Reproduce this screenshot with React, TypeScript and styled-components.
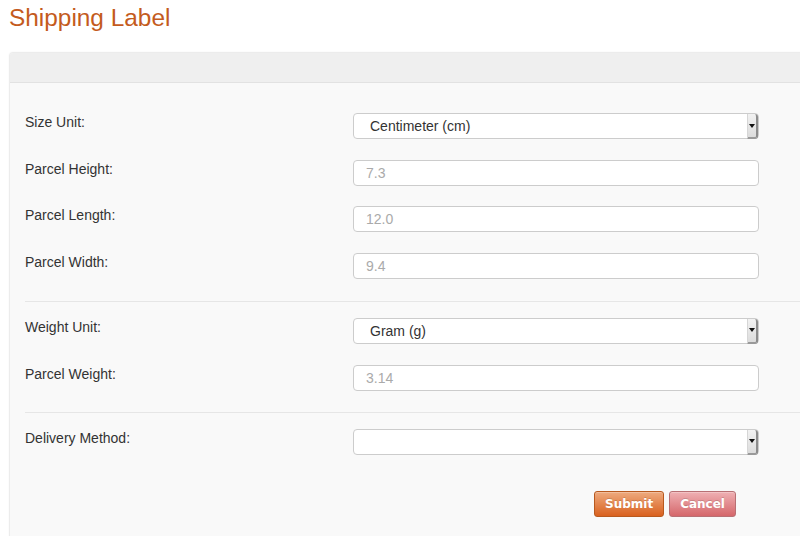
import styled, { createGlobalStyle } from 'styled-components';

const GlobalStyle = createGlobalStyle`
  html, body {
    margin: 0;
    padding: 0;
    background: #ffffff;
    overflow: hidden;
  }
  body {
    font-family: "Liberation Sans", Arial, sans-serif;
    color: #333333;
  }
`;

type Field = {
  label: string;
  kind: 'select' | 'input';
  value?: string;
};

const groups: Field[][] = [
  [
    { label: 'Size Unit:', kind: 'select', value: 'Centimeter (cm)' },
    { label: 'Parcel Height:', kind: 'input', value: '7.3' },
    { label: 'Parcel Length:', kind: 'input', value: '12.0' },
    { label: 'Parcel Width:', kind: 'input', value: '9.4' },
  ],
  [
    { label: 'Weight Unit:', kind: 'select', value: 'Gram (g)' },
    { label: 'Parcel Weight:', kind: 'input', value: '3.14' },
  ],
  [{ label: 'Delivery Method:', kind: 'select', value: '' }],
];

export default function App() {
  return (
    <Page>
      <GlobalStyle />
      <Title>Shipping Label</Title>
      <Panel>
        <PanelHeader />
        <PanelBody>
          {groups.map((fields, gi) => (
            <Group key={gi} first={gi === 0}>
              {fields.map((f) => (
                <Row key={f.label}>
                  <Label>{f.label}</Label>
                  {f.kind === 'select' ? (
                    <SelectBox>
                      <SelectText>{f.value}</SelectText>
                      <ArrowButton>
                        <svg width="6" height="4" viewBox="0 0 6 4">
                          <path d="M0 0 H6 L3 4 Z" fill="#111" />
                        </svg>
                      </ArrowButton>
                    </SelectBox>
                  ) : (
                    <TextInput placeholder={f.value} />
                  )}
                </Row>
              ))}
            </Group>
          ))}
          <Actions>
            <ActionButton variant="submit">Submit</ActionButton>
            <ActionButton variant="cancel">Cancel</ActionButton>
          </Actions>
        </PanelBody>
      </Panel>
    </Page>
  );
}

const Page = styled.div`
  width: 800px;
  height: 536px;
  overflow: hidden;
`;

const Title = styled.h1`
  margin: 0;
  padding: 3px 0 0 9px;
  font-size: 24.4px;
  line-height: 30px;
  font-weight: normal;
  color: #c45b1d;
`;

const Panel = styled.div`
  margin: 19px 0 0 9px;
  width: 830px;
  height: 520px;
  background: #f9f9f9;
  border: 1px solid #ececec;
  border-radius: 4px;
  box-shadow: 0 0 2px rgba(0, 0, 0, 0.06);
  overflow: hidden;
`;

const PanelHeader = styled.div`
  height: 29px;
  background: #efefef;
  border-bottom: 1px solid #e2e2e2;
`;

const PanelBody = styled.div`
  padding-left: 15px;
`;

const Group = styled.div<{ first?: boolean }>`
  display: flex;
  flex-direction: column;
  gap: 20.67px;
  padding: ${(p) => (p.first ? '30px 0 22px' : '16px 0 21px')};
  border-top: ${(p) => (p.first ? 'none' : '1px solid #e6e6e6')};
`;

const Row = styled.div`
  display: grid;
  grid-template-columns: 328px 406px;
  align-items: start;
`;

const Label = styled.label`
  font-size: 14px;
  line-height: 18px;
  color: #333333;
`;

const SelectBox = styled.div`
  position: relative;
  box-sizing: border-box;
  height: 26px;
  background: #ffffff;
  border: 1px solid #cccccc;
  border-radius: 4px;
  display: flex;
  align-items: center;
`;

const SelectText = styled.span`
  padding-left: 16px;
  font-size: 14px;
  color: #333333;
`;

const ArrowButton = styled.span`
  position: absolute;
  top: 0;
  right: 0;
  bottom: -1px;
  width: 11px;
  box-sizing: border-box;
  background: linear-gradient(#f2f2f2, #dcdcdc);
  border-left: 1px solid #d6d6d6;
  border-right: 2px solid #8c8c8c;
  border-bottom: 2px solid #9a9a9a;
  border-radius: 0 3px 3px 0;
  display: flex;
  align-items: center;
  justify-content: center;
`;

const TextInput = styled.input`
  box-sizing: border-box;
  height: 26px;
  width: 406px;
  margin: 0;
  padding: 0 12px;
  background: #ffffff;
  border: 1px solid #cccccc;
  border-radius: 4px;
  font-family: "Liberation Sans", Arial, sans-serif;
  font-size: 14px;
  color: #333333;
  outline: none;

  &::placeholder {
    color: #aaaaaa;
  }
`;

const Actions = styled.div`
  display: flex;
  gap: 5px;
  padding: 15px 0 0 569px;
`;

const ActionButton = styled.button<{ variant: 'submit' | 'cancel' }>`
  height: 26px;
  margin: 0;
  padding: 0 10px;
  border-radius: 3px;
  font-family: "DejaVu Sans", Verdana, sans-serif;
  font-weight: bold;
  font-size: 12px;
  color: #ffffff;
  text-shadow: 0 -1px 0 rgba(0, 0, 0, 0.15);
  cursor: pointer;
  border: 1px solid
    ${(p) => (p.variant === 'submit' ? '#b8591f' : '#b87074')};
  background: ${(p) =>
    p.variant === 'submit'
      ? 'linear-gradient(#eeaa7e, #d9611f)'
      : 'linear-gradient(#efb0b3, #d5676b)'};
  box-shadow: inset 0 1px 0 rgba(255, 255, 255, 0.25);
`;
